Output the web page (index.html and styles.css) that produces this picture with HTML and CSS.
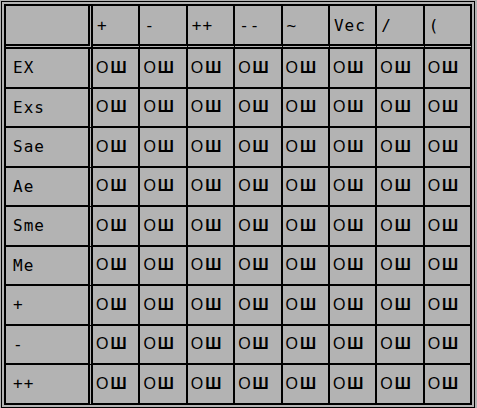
FILE: index.html
```html
<!DOCTYPE html>
<html>
<head>
<meta charset="utf-8">
<link rel="stylesheet" href="styles.css">
</head>
<body>
<div class="frame">
<table class="grid">
<thead>
<tr><th class="corner"></th><th>+</th><th>-</th><th>++</th><th>--</th><th>~</th><th>Vec</th><th>/</th><th>(</th></tr>
</thead>
<tbody>
<tr><th class="lab">EX</th><td>О<span class="sh">Ш</span></td><td>О<span class="sh">Ш</span></td><td>О<span class="sh">Ш</span></td><td>О<span class="sh">Ш</span></td><td>О<span class="sh">Ш</span></td><td>О<span class="sh">Ш</span></td><td>О<span class="sh">Ш</span></td><td>О<span class="sh">Ш</span></td></tr>
<tr><th class="lab">Exs</th><td>О<span class="sh">Ш</span></td><td>О<span class="sh">Ш</span></td><td>О<span class="sh">Ш</span></td><td>О<span class="sh">Ш</span></td><td>О<span class="sh">Ш</span></td><td>О<span class="sh">Ш</span></td><td>О<span class="sh">Ш</span></td><td>О<span class="sh">Ш</span></td></tr>
<tr><th class="lab">Sae</th><td>О<span class="sh">Ш</span></td><td>О<span class="sh">Ш</span></td><td>О<span class="sh">Ш</span></td><td>О<span class="sh">Ш</span></td><td>О<span class="sh">Ш</span></td><td>О<span class="sh">Ш</span></td><td>О<span class="sh">Ш</span></td><td>О<span class="sh">Ш</span></td></tr>
<tr><th class="lab">Ae</th><td>О<span class="sh">Ш</span></td><td>О<span class="sh">Ш</span></td><td>О<span class="sh">Ш</span></td><td>О<span class="sh">Ш</span></td><td>О<span class="sh">Ш</span></td><td>О<span class="sh">Ш</span></td><td>О<span class="sh">Ш</span></td><td>О<span class="sh">Ш</span></td></tr>
<tr><th class="lab">Sme</th><td>О<span class="sh">Ш</span></td><td>О<span class="sh">Ш</span></td><td>О<span class="sh">Ш</span></td><td>О<span class="sh">Ш</span></td><td>О<span class="sh">Ш</span></td><td>О<span class="sh">Ш</span></td><td>О<span class="sh">Ш</span></td><td>О<span class="sh">Ш</span></td></tr>
<tr><th class="lab">Me</th><td>О<span class="sh">Ш</span></td><td>О<span class="sh">Ш</span></td><td>О<span class="sh">Ш</span></td><td>О<span class="sh">Ш</span></td><td>О<span class="sh">Ш</span></td><td>О<span class="sh">Ш</span></td><td>О<span class="sh">Ш</span></td><td>О<span class="sh">Ш</span></td></tr>
<tr><th class="lab">+</th><td>О<span class="sh">Ш</span></td><td>О<span class="sh">Ш</span></td><td>О<span class="sh">Ш</span></td><td>О<span class="sh">Ш</span></td><td>О<span class="sh">Ш</span></td><td>О<span class="sh">Ш</span></td><td>О<span class="sh">Ш</span></td><td>О<span class="sh">Ш</span></td></tr>
<tr><th class="lab">-</th><td>О<span class="sh">Ш</span></td><td>О<span class="sh">Ш</span></td><td>О<span class="sh">Ш</span></td><td>О<span class="sh">Ш</span></td><td>О<span class="sh">Ш</span></td><td>О<span class="sh">Ш</span></td><td>О<span class="sh">Ш</span></td><td>О<span class="sh">Ш</span></td></tr>
<tr><th class="lab">++</th><td>О<span class="sh">Ш</span></td><td>О<span class="sh">Ш</span></td><td>О<span class="sh">Ш</span></td><td>О<span class="sh">Ш</span></td><td>О<span class="sh">Ш</span></td><td>О<span class="sh">Ш</span></td><td>О<span class="sh">Ш</span></td><td>О<span class="sh">Ш</span></td></tr>
</tbody>
</table>
</div>
</body>
</html>
```
FILE: styles.css
```css
html, body {
  margin: 0;
  padding: 0;
  background: #b3b3b3;
}
body {
  padding: 1px;
}
.frame {
  display: inline-block;
  border: 1px solid #000;
  padding: 2px;
  background: #b3b3b3;
}
.grid {
  border-collapse: separate;
  border-spacing: 0;
  table-layout: fixed;
  width: 468px;
  border-top: 2px solid #000;
  border-left: 2px solid #000;
  font-family: "DejaVu Sans Mono", monospace;
  font-size: 16px;
  color: #000;
}
.grid th, .grid td {
  border-right: 2px solid #000;
  border-bottom: 2px solid #000;
  padding: 0 0 0 4px;
  text-align: left;
  vertical-align: middle;
  font-weight: normal;
  letter-spacing: 1px;
  white-space: nowrap;
  overflow: hidden;
}
.grid thead th {
  height: 38px;
  border-bottom: 5px double #000;
}
.grid th.corner, .grid th.lab {
  width: 75px;
  border-right: 5px double #000;
  padding-left: 7px;
}
.grid tbody th, .grid tbody td {
  height: 37.5px;
}
.grid td {
  font-family: "Liberation Sans", "DejaVu Sans", sans-serif;
  font-size: 16px;
  letter-spacing: 0;
  padding-left: 3px;
}
.sh {
  font-weight: bold;
  margin-left: 2px;
}
```
